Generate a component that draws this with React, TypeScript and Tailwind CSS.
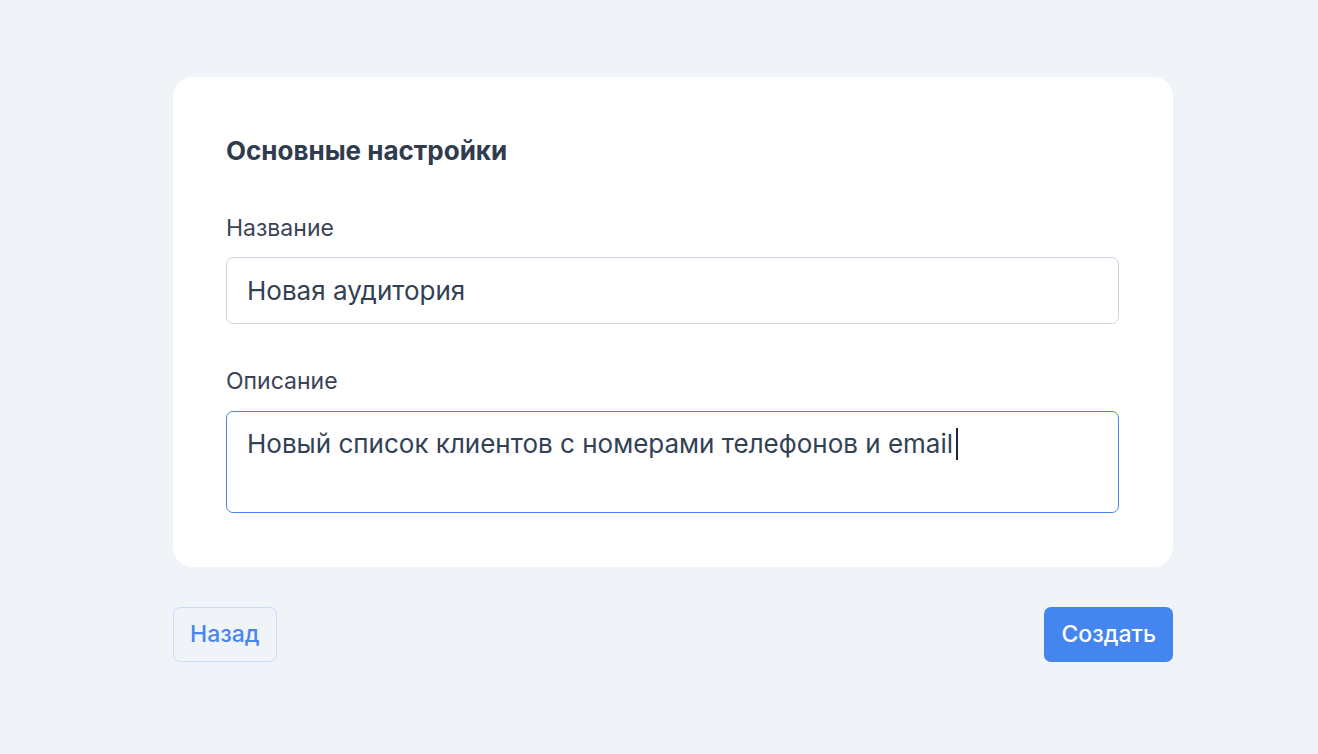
const App = () => {
    return (
        <div className="min-h-screen bg-[#f0f3f8] pt-[77px] font-['Inter',sans-serif] text-[#334155]">
            <div className="ml-[173px] w-[1000px]">
                <div className="rounded-[20px] bg-white pl-[53px] pr-[54px] pt-[58px] pb-[54px]">
                    <h2 className="text-[26px] font-bold leading-[32px] text-[#303b4d]">Основные настройки</h2>

                    <label className="mt-[47px] block text-[23px] leading-[28px] text-[#3b4456]">Название</label>
                    <div className="mt-[15px] flex h-[67px] items-center rounded-[7px] border border-[#cbd5e1] px-[20px] text-[26px] text-[#334155]">
                        Новая аудитория
                    </div>

                    <label className="mt-[43px] block text-[23px] leading-[28px] text-[#3b4456]">Описание</label>
                    <div className="mt-[16px] h-[102px] rounded-[7px] border border-[#4a85ef] px-[20px] pt-[9px] text-[26px] leading-[34px] text-[#334155]">
                        Новый список клиентов с номерами телефонов и email
                        <span className="ml-[3px] inline-block h-[32px] w-[2px] translate-y-[7px] bg-[#1e293b]" />
                    </div>
                </div>

                <div className="mt-[40px] flex items-center justify-between">
                    <button className="h-[55px] rounded-[7px] border border-[#c7dbfb] px-[16px] text-[23px] font-medium text-[#4a85ef]">
                        Назад
                    </button>
                    <button className="h-[55px] rounded-[7px] bg-[#4585f0] px-[17px] text-[23px] font-medium text-white">
                        Создать
                    </button>
                </div>
            </div>
        </div>
    )
}

export default App
